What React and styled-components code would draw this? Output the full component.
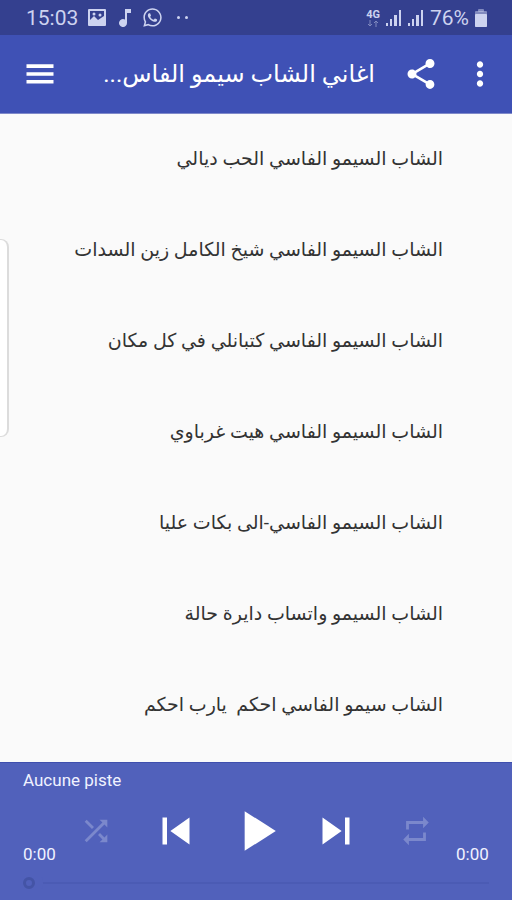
import React from 'react'
import styled, { createGlobalStyle } from 'styled-components';
import { MdShare, MdMoreVert, MdShuffle, MdRepeat, MdSkipPrevious, MdSkipNext, MdPlayArrow } from 'react-icons/md';
import { FaWhatsapp } from 'react-icons/fa';

const songs = [
    "الشاب السيمو الفاسي الحب ديالي",
    "الشاب السيمو الفاسي شيخ الكامل زين السدات",
    "الشاب السيمو الفاسي كتبانلي في كل مكان",
    "الشاب السيمو الفاسي هيت غرباوي",
    "الشاب السيمو الفاسي-الى بكات عليا",
    "الشاب السيمو واتساب دايرة حالة",
    "الشاب سيمو الفاسي احكم  يارب احكم",
]

function Picture() {
    return (
        <svg width="22" height="18" viewBox="0 0 22 18" fill="currentColor">
            <path fillRule="evenodd" d="M3 0h16a1 1 0 0 1 1 1v15a1 1 0 0 1-1 1H3a1 1 0 0 1-1-1V1a1 1 0 0 1 1-1zM4 2v9l4-4 4 4 6-4V2z" />
            <circle cx="8" cy="5" r="1.5" />
            <circle cx="14" cy="6" r="1.5" />
        </svg>
    )
}

function Note() {
    return (
        <svg width="18" height="18" viewBox="3 3 18 18" fill="currentColor">
            <path d="M12 3v10.55A4 4 0 1 0 14 17V7h4V3z" />
        </svg>
    )
}

function Signal() {
    return (
        <svg width="16" height="18" viewBox="0 0 16 18" fill="currentColor">
            <rect x="0" y="14" width="2" height="3" />
            <rect x="4" y="10" width="2" height="7" />
            <rect x="8" y="6" width="3" height="11" />
            <rect x="13" y="1" width="2" height="16" />
        </svg>
    )
}

function Battery() {
    return (
        <svg width="12" height="18" viewBox="0 0 12 18" fill="currentColor">
            <rect x="3" y="0" width="6" height="3" rx="1" opacity="0.5" />
            <rect x="0" y="2" width="12" height="16" rx="1" opacity="0.5" />
            <rect x="0" y="5" width="12" height="13" rx="1" />
        </svg>
    )
}

function DataArrows() {
    return (
        <svg width="12" height="7" viewBox="0 0 12 7" fill="none" stroke="currentColor" opacity="0.5">
            <path d="M3 0v6M1 4l2 2 2-2M9 7V1M7 3l2-2 2 2" />
        </svg>
    )
}

function Menu() {
    return (
        <svg width="36" height="36" viewBox="0 0 36 36" fill="currentColor">
            <path d="M4.5 8.3h27v3.6h-27zM4.5 16.2h27v3.6h-27zM4.5 24h27v3.6h-27z" />
        </svg>
    )
}

export default function App() {
    return (
        <Page>
            <GlobalStyle />
            <StatusBar>
                <StatusGroup>
                    <Clock>15:03</Clock>
                    <Picture />
                    <Note />
                    <FaWhatsapp size={21} />
                    <Dots>
                        <Dot />
                        <Dot />
                    </Dots>
                </StatusGroup>
                <StatusGroup $tight>
                    <Network>
                        4G
                        <DataArrows />
                    </Network>
                    <Signal />
                    <Signal />
                    <Clock>76%</Clock>
                    <Battery />
                </StatusGroup>
            </StatusBar>
            <AppBar>
                <IconButton aria-label="Menu"><Menu /></IconButton>
                <Title dir="rtl">اغاني الشاب سيمو الفاس...</Title>
                <IconButton aria-label="Partager"><MdShare size={36} /></IconButton>
                <IconButton aria-label="Plus"><MdMoreVert size={38} /></IconButton>
            </AppBar>
            <List dir="rtl">
                {songs.map((song) => (
                    <li key={song}>
                        <Song>{song}</Song>
                    </li>
                ))}
            </List>
            <EdgeHandle />
            <Player>
                <Track>Aucune piste</Track>
                <Controls>
                    <Time>0:00</Time>
                    <Buttons>
                        <IconButton $dim aria-label="Aléatoire"><MdShuffle size={34} /></IconButton>
                        <IconButton aria-label="Précédent"><MdSkipPrevious size={54} /></IconButton>
                        <IconButton aria-label="Lecture"><MdPlayArrow size={68} /></IconButton>
                        <IconButton aria-label="Suivant"><MdSkipNext size={54} /></IconButton>
                        <IconButton $dim aria-label="Répéter"><MdRepeat size={34} /></IconButton>
                    </Buttons>
                    <Time>0:00</Time>
                </Controls>
                <Seek type="range" min="0" max="100" defaultValue="0" aria-label="Position" />
            </Player>
        </Page>
    )
}

const GlobalStyle = createGlobalStyle`
    *{
        box-sizing:border-box;
    }
    body{
        margin:0;
        background:#fafafa;
        font-family:Roboto, "DejaVu Sans", sans-serif;
    }
`;
const Page = styled.div`
    position:relative;
    display:flex;
    flex-direction:column;
    min-height:100vh;
`;
const StatusBar = styled.header`
    display:flex;
    justify-content:space-between;
    align-items:center;
    height:35px;
    padding:0 25px 0 26px;
    background:#34408f;
    color:#cdd3f0;
`;
const StatusGroup = styled.div`
    display:flex;
    align-items:center;
    gap:${(props) => (props.$tight ? 6 : 8)}px;
`;
const Clock = styled.span`
    font-size:21px;
    line-height:28px;
`;
const Dots = styled.div`
    display:flex;
    gap:5px;
    padding-left:6px;
`;
const Dot = styled.span`
    width:3px;
    height:3px;
    border-radius:50%;
    background:currentColor;
`;
const Network = styled.span`
    display:flex;
    flex-direction:column;
    align-items:center;
    font-size:11px;
    line-height:11px;
    font-weight:700;
`;
const AppBar = styled.div`
    display:flex;
    align-items:center;
    height:79px;
    padding:0 13px 0 22px;
    background:#3f51b5;
    border-bottom:1px solid #7f89c9;
`;
const IconButton = styled.button`
    display:flex;
    align-items:center;
    justify-content:center;
    padding:0;
    border:0;
    background:none;
    color:${(props) => (props.$dim ? "#7b88cc" : "#fff")};
    cursor:pointer;
`;
const Title = styled.h1`
    flex:1;
    margin:0 28px 0 0;
    font-size:24px;
    line-height:32px;
    font-weight:400;
    color:#fff;
    white-space:nowrap;

    & + button{
        margin-right:22px;
    }
`;
const List = styled.ul`
    flex:1;
    margin:0;
    padding:0 0 11px;
    list-style:none;
`;
const Song = styled.button`
    display:block;
    width:100%;
    height:91px;
    padding:0 69px 2px 24px;
    border:0;
    background:none;
    color:#333;
    font-family:inherit;
    font-size:19px;
    line-height:28px;
    text-align:right;
    white-space:pre;
`;
const EdgeHandle = styled.div`
    position:absolute;
    top:239px;
    left:0;
    width:9px;
    height:198px;
    border:solid #dcdcdc;
    border-width:1px 2px 1px 0;
    border-radius:0 8px 8px 0;
    background:#fff;
`;
const Player = styled.footer`
    display:flex;
    flex-direction:column;
    padding:7px 23px 6px;
    border-top:1px solid #3f4fae;
    background:#5161bb;
    color:#f0f2ff;
`;
const Track = styled.div`
    margin-bottom:7px;
    font-size:17px;
    line-height:20px;
`;
const Controls = styled.div`
    display:grid;
    grid-template-columns:33px 1fr 33px;
`;
const Buttons = styled.div`
    display:grid;
    grid-template-columns:repeat(5, 1fr);
    height:68px;
`;
const Time = styled.span`
    align-self:end;
    font-size:17px;
    line-height:22px;
`;
const Seek = styled.input`
    appearance:none;
    width:100%;
    height:12px;
    margin:12px 0 5px;
    background:none;
    overflow:hidden;

    &::-webkit-slider-runnable-track{
        height:12px;
        background:linear-gradient(#4b5bb4, #4b5bb4) center / 100% 2px no-repeat;
    }
    &::-webkit-slider-thumb{
        appearance:none;
        width:12px;
        height:12px;
        border:3px solid #4454a6;
        border-radius:50%;
        background:#5161bb;
        box-shadow:0 0 0 8px #5161bb;
    }
`;
